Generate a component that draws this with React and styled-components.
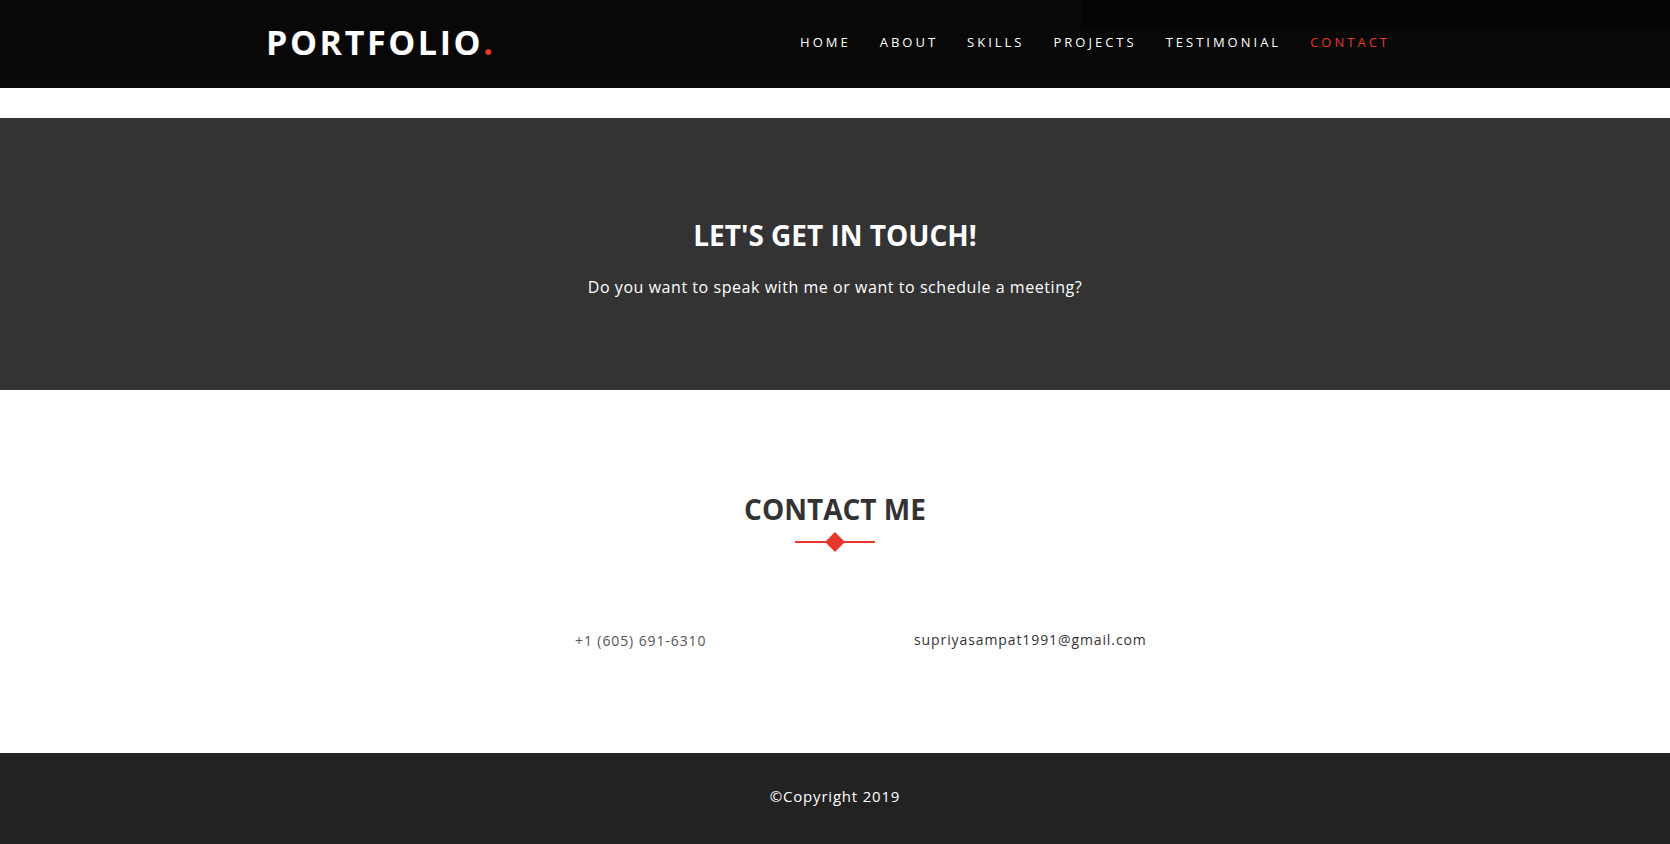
import styled, { createGlobalStyle } from "styled-components";

const RED = "#e8382c";

const GlobalStyle = createGlobalStyle`
  * {
    box-sizing: border-box;
  }

  body {
    margin: 0;
    background: #ffffff;
    font-family: "Open Sans", "Liberation Sans", sans-serif;
  }
`;

const Header = styled.header`
  position: relative;
  height: 88px;
  background: #080808;
  display: flex;
  align-items: center;
  justify-content: space-between;
  padding: 0 280px 4px 266px;
`;

const HeaderStrip = styled.svg`
  position: absolute;
  top: 0;
  left: 556px;
  width: 1114px;
  height: 27px;
`;

const Logo = styled.div`
  position: relative;
  font-size: 34px;
  font-weight: 700;
  letter-spacing: 2.6px;
  color: #ffffff;

  span {
    color: ${RED};
  }
`;

const Nav = styled.nav`
  position: relative;
  display: flex;
  gap: 29px;
`;

const NavLink = styled.a`
  font-size: 13px;
  font-weight: 500;
  letter-spacing: 3px;
  text-transform: uppercase;
  color: ${(p) => (p.$active ? RED : "#ffffff")};
  text-decoration: none;
`;

const Spacer = styled.div`
  height: 30px;
`;

const Banner = styled.section`
  height: 272px;
  background: #333333;
  display: flex;
  flex-direction: column;
  align-items: center;
  padding-top: 98px;
  color: #ffffff;
`;

const BannerTitle = styled.h2`
  margin: 0;
  font-size: 28px;
  font-weight: 700;
  line-height: 38px;
`;

const BannerText = styled.p`
  margin: 22px 0 0;
  font-size: 16px;
  font-weight: 500;
  letter-spacing: 0.55px;
`;

const ContactSection = styled.section`
  height: 363px;
  padding-top: 101px;
  display: flex;
  flex-direction: column;
  align-items: center;
`;

const SectionTitle = styled.h2`
  margin: 0;
  font-size: 28px;
  font-weight: 700;
  line-height: 36px;
  color: #333333;
`;

const Divider = styled.div`
  position: relative;
  width: 80px;
  height: 2px;
  margin-top: 14px;
  background: ${RED};

  &::after {
    content: "";
    position: absolute;
    left: 33px;
    top: -6px;
    width: 14px;
    height: 14px;
    background: ${RED};
    transform: rotate(45deg);
  }
`;

const InfoRow = styled.div`
  align-self: stretch;
  display: grid;
  grid-template-columns: 339px 339px;
  margin: 87px 0 0 575px;
`;

const InfoItem = styled.div`
  font-size: 14px;
  letter-spacing: ${(p) => p.$spacing}px;
  color: ${(p) => p.$color};
  margin-top: ${(p) => p.$shift}px;
`;

const Footer = styled.footer`
  height: 91px;
  background: #222222;
  display: flex;
  align-items: center;
  justify-content: center;
  padding-bottom: 6px;
  color: #ffffff;
  font-size: 15px;
  font-weight: 500;
  letter-spacing: 0.8px;
`;

const links = ["Home", "About", "Skills", "Projects", "Testimonial", "Contact"];

export default function App() {
  return (
    <>
      <GlobalStyle />
      <Header>
        <HeaderStrip viewBox="0 0 1114 27" preserveAspectRatio="none">
          <rect x="0" y="0" width="110" height="27" fill="#090907" />
          <rect x="380" y="0" width="140" height="27" fill="#080909" />
          <rect x="525" y="0" width="589" height="27" fill="#040404" />
        </HeaderStrip>
        <Logo>
          PORTFOLIO<span>.</span>
        </Logo>
        <Nav>
          {links.map((l) => (
            <NavLink key={l} href="#" $active={l === "Contact"}>
              {l}
            </NavLink>
          ))}
        </Nav>
      </Header>
      <Spacer />
      <Banner>
        <BannerTitle>LET'S GET IN TOUCH!</BannerTitle>
        <BannerText>
          Do you want to speak with me or want to schedule a meeting?
        </BannerText>
      </Banner>
      <ContactSection>
        <SectionTitle>CONTACT ME</SectionTitle>
        <Divider />
        <InfoRow>
          <InfoItem $color="#555555" $shift={1} $spacing={0.9}>
            +1 (605) 691-6310
          </InfoItem>
          <InfoItem $color="#333333" $shift={0} $spacing={0.9}>
            supriyasampat1991@gmail.com
          </InfoItem>
        </InfoRow>
      </ContactSection>
      <Footer>©Copyright 2019</Footer>
    </>
  );
}
